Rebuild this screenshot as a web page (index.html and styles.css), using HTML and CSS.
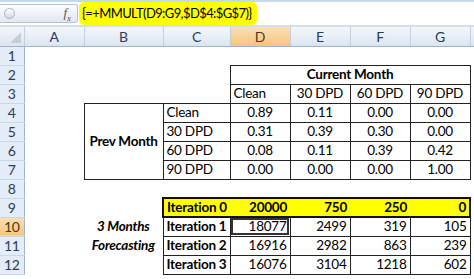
FILE: index.html
```html
<!DOCTYPE html>
<html lang="en">
<head>
    <meta charset="UTF-8">
    <title>Markov forecast</title>
    <link rel="stylesheet" href="styles.css">
</head>
<body>
    <div class="formula-bar">
        <div class="name-box">
            <span class="name-dot"></span>
            <span class="fx">f<sub>x</sub></span>
        </div>
        <div class="formula-input">
            <span class="formula-text">{=+MMULT(D9:G9,$D$4:$G$7)}</span>
        </div>
    </div>

    <table class="sheet">
        <colgroup>
            <col class="c-rh">
            <col class="c-a">
            <col class="c-b">
            <col class="c-c">
            <col class="c-n">
            <col class="c-n">
            <col class="c-n">
            <col class="c-n">
            <col class="c-x">
        </colgroup>
        <thead>
            <tr>
                <th class="corner"><span class="corner-tri"></span></th>
                <th>A</th>
                <th>B</th>
                <th>C</th>
                <th class="active">D</th>
                <th>E</th>
                <th>F</th>
                <th>G</th>
                <th></th>
            </tr>
        </thead>
        <tbody>
            <tr>
                <th>1</th>
                <td></td><td></td><td></td><td></td><td></td><td></td><td></td><td></td>
            </tr>
            <tr>
                <th>2</th>
                <td></td><td></td><td></td>
                <td colspan="4" class="box bold center">Current Month</td>
                <td></td>
            </tr>
            <tr>
                <th>3</th>
                <td></td><td></td><td></td>
                <td class="box">Clean</td>
                <td class="box center">30 DPD</td>
                <td class="box center">60 DPD</td>
                <td class="box center">90 DPD</td>
                <td></td>
            </tr>
            <tr>
                <th>4</th>
                <td></td>
                <td rowspan="4" class="box bold center">Prev Month</td>
                <td class="box">Clean</td>
                <td class="box center">0.89</td>
                <td class="box center">0.11</td>
                <td class="box center">0.00</td>
                <td class="box center">0.00</td>
                <td></td>
            </tr>
            <tr>
                <th>5</th>
                <td></td>
                <td class="box">30 DPD</td>
                <td class="box center">0.31</td>
                <td class="box center">0.39</td>
                <td class="box center">0.30</td>
                <td class="box center">0.00</td>
                <td></td>
            </tr>
            <tr>
                <th>6</th>
                <td></td>
                <td class="box">60 DPD</td>
                <td class="box center">0.08</td>
                <td class="box center">0.11</td>
                <td class="box center">0.39</td>
                <td class="box center">0.42</td>
                <td></td>
            </tr>
            <tr>
                <th>7</th>
                <td></td>
                <td class="box">90 DPD</td>
                <td class="box center">0.00</td>
                <td class="box center">0.00</td>
                <td class="box center">0.00</td>
                <td class="box center">1.00</td>
                <td></td>
            </tr>
            <tr>
                <th>8</th>
                <td></td><td></td><td></td><td></td><td></td><td></td><td></td><td></td>
            </tr>
            <tr class="iter-0">
                <th>9</th>
                <td></td><td></td>
                <td class="hl bold first">Iteration 0</td>
                <td class="hl bold num">20000</td>
                <td class="hl bold num">750</td>
                <td class="hl bold num">250</td>
                <td class="hl bold num last">0</td>
                <td></td>
            </tr>
            <tr>
                <th class="active">10</th>
                <td></td>
                <td class="bold italic center">3 Months</td>
                <td class="box bold">Iteration 1</td>
                <td class="box num selected">18077</td>
                <td class="box num">2499</td>
                <td class="box num">319</td>
                <td class="box num">105</td>
                <td></td>
            </tr>
            <tr>
                <th>11</th>
                <td></td>
                <td class="bold italic center">Forecasting</td>
                <td class="box bold">Iteration 2</td>
                <td class="box num">16916</td>
                <td class="box num">2982</td>
                <td class="box num">863</td>
                <td class="box num">239</td>
                <td></td>
            </tr>
            <tr>
                <th>12</th>
                <td></td><td></td>
                <td class="box bold">Iteration 3</td>
                <td class="box num">16076</td>
                <td class="box num">3104</td>
                <td class="box num">1218</td>
                <td class="box num">602</td>
                <td></td>
            </tr>
        </tbody>
    </table>
</body>
</html>
```

FILE: styles.css
```css
body {
    margin: 0;
    width: 474px;
    height: 279px;
    overflow: hidden;
    background-color: #fff;
    font-family: Lato, "Liberation Sans", sans-serif;
    color: #000;
}

.formula-bar {
    display: flex;
    align-items: center;
    height: 27px;
    box-sizing: border-box;
    border-top: 2px solid #c6d8ee;
    border-bottom: 2px solid #d5dfea;
    background-color: #fff;
}

.name-box {
    display: flex;
    justify-content: space-between;
    align-items: center;
    width: 78px;
    height: 19px;
    box-sizing: border-box;
    padding: 0 6px 0 4px;
    border: 1px solid #b4c2d3;
    border-left: none;
    border-radius: 0 3px 3px 0;
    background: linear-gradient(#fbfcfe, #e3e8ef);
}

.name-dot {
    width: 9px;
    height: 9px;
    border-radius: 50%;
    border: 1px solid #a9b4c2;
    background: linear-gradient(#ffffff, #d3dae4);
}

.fx {
    font-family: "Liberation Serif", serif;
    font-style: italic;
    font-size: 13px;
    color: #555;
}

.fx sub {
    font-size: 9px;
}

.formula-input {
    flex: 1;
    padding-left: 1px;
}

.formula-text {
    display: inline-block;
    padding: 1px 5px 1px 3px;
    border-radius: 5px;
    background-color: #ffff00;
    font-size: 13px;
    letter-spacing: -0.6px;
    line-height: 21px;
}

.sheet {
    border-collapse: collapse;
    table-layout: fixed;
    width: 474px;
    font-size: 13.5px;
    letter-spacing: -0.25px;
}

.c-rh { width: 24px; }
.c-a { width: 60px; }
.c-b { width: 79px; }
.c-c { width: 67px; }
.c-n { width: 60px; }
.c-x { width: 4px; }

.sheet th,
.sheet td {
    height: 19px;
    padding: 0 3px;
    box-sizing: border-box;
    white-space: nowrap;
    overflow: hidden;
    line-height: 17px;
}

.sheet thead th {
    font-weight: normal;
    font-size: 14px;
    color: #2b3d55;
    background: linear-gradient(#f4f7fb, #dbe4ef);
    border-right: 1px solid #c3cfdd;
    border-bottom: 1px solid #9eb3cc;
}

.sheet thead th.active {
    background: linear-gradient(#fbe0b4, #f5c47b);
    color: #4a3a20;
}

.sheet tbody th {
    font-weight: normal;
    font-size: 14px;
    color: #2b3d55;
    background-color: #e4ecf7;
    border-right: 1px solid #9eb3cc;
    border-bottom: 1px solid #c9d6e6;
    padding: 0;
}

.sheet tbody th.active {
    background: linear-gradient(#fbe0b4, #f5c47b);
    color: #4a3a20;
}

.corner {
    position: relative;
}

.corner-tri {
    position: absolute;
    right: 3px;
    bottom: 3px;
    width: 0;
    height: 0;
    border-left: 11px solid transparent;
    border-bottom: 11px solid #c4cfdb;
}

.box {
    border: 1px solid #222;
}

.bold {
    font-weight: bold;
}

.italic {
    font-style: italic;
}

.center {
    text-align: center;
}

.num {
    text-align: right;
}

.hl {
    background-color: #ffff00;
    border-top: 2px solid #111;
    border-bottom: 2px solid #111;
}

.hl.first {
    border-left: 2px solid #111;
}

.hl.last {
    border-right: 2px solid #111;
}

.selected {
    outline: 2px solid #333;
    outline-offset: -3px;
}
```
